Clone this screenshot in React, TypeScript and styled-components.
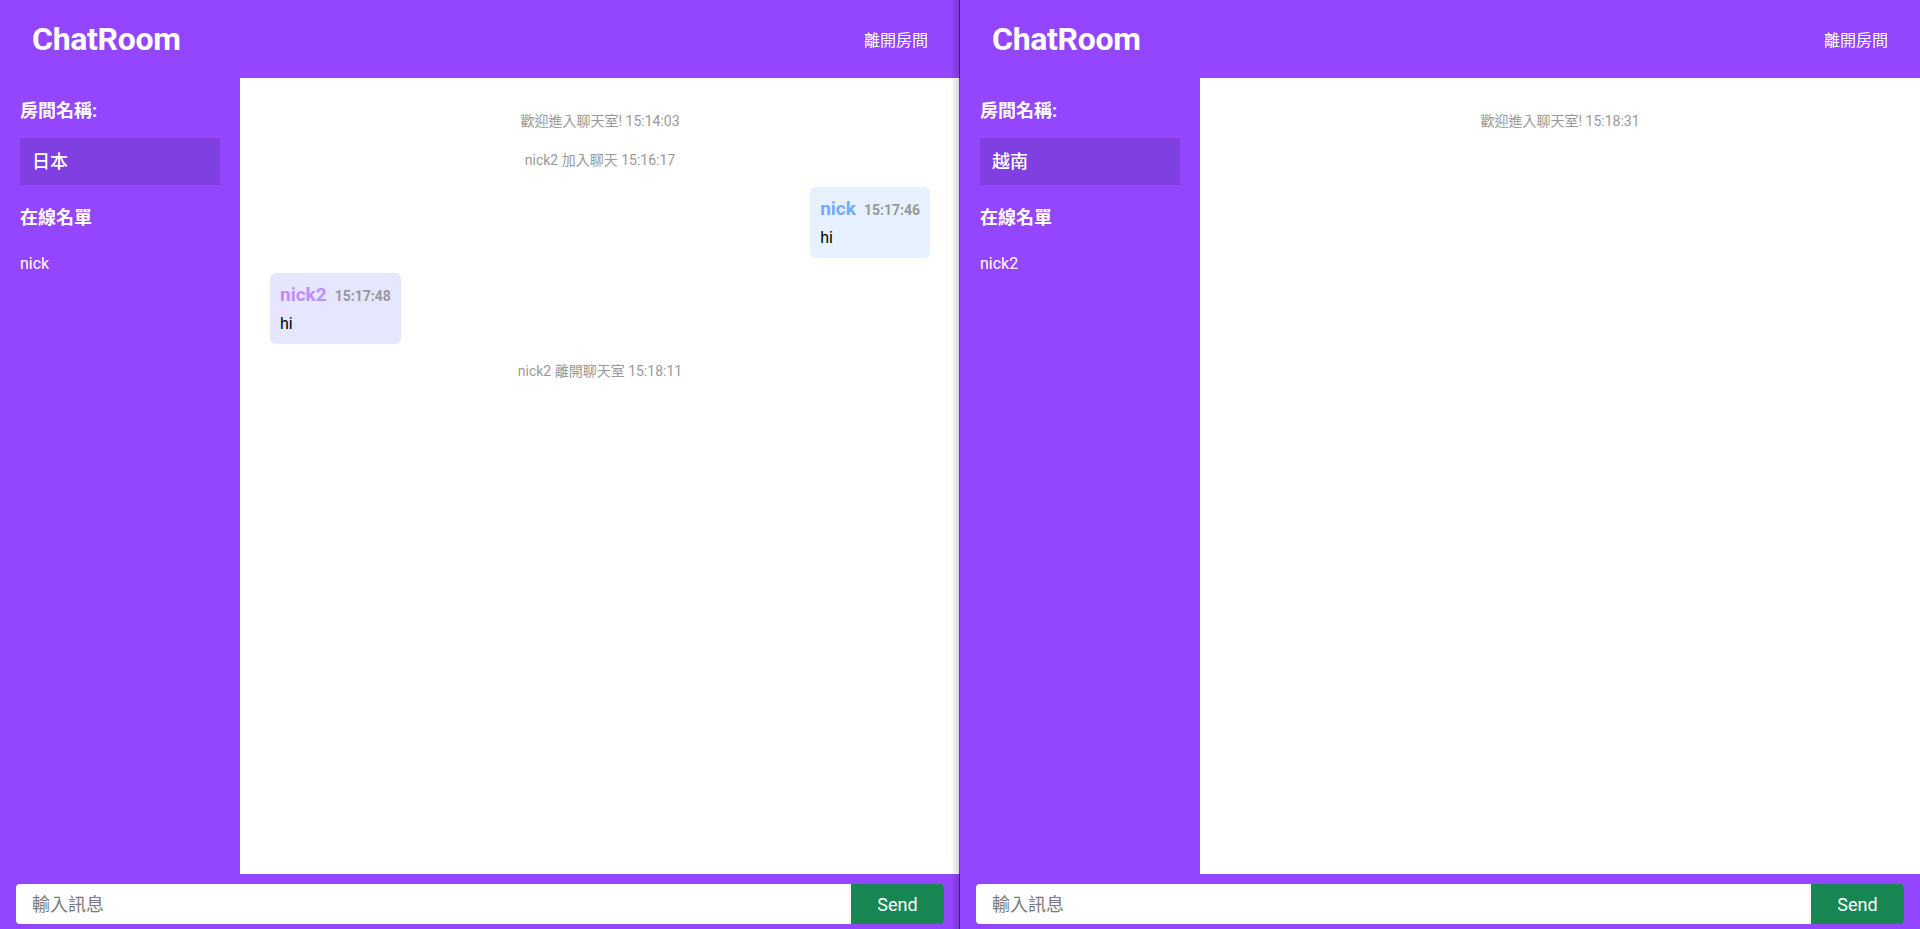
import React from "react";
import styled, { createGlobalStyle } from "styled-components";

const GlobalStyle = createGlobalStyle`
  html, body { margin: 0; padding: 0; }
  body {
    font-family: Roboto, "Noto Sans CJK TC", sans-serif;
    overflow: hidden;
  }
  * { box-sizing: border-box; }
`;

const Screen = styled.div`
  display: grid;
  grid-template-columns: 960px 960px;
  height: 100vh;
`;

const Pane = styled.div<{ $divider?: boolean }>`
  position: relative;
  display: flex;
  flex-direction: column;
  height: 100vh;
  background: #9446ff;
  ${(p) =>
    p.$divider &&
    `
    &::after {
      content: "";
      position: absolute;
      top: 0;
      right: 0;
      bottom: 0;
      width: 8px;
      background: linear-gradient(to right, rgba(0,0,0,0), rgba(0,0,0,0.16));
      border-right: 1px solid rgba(40, 20, 70, 0.75);
      pointer-events: none;
    }
  `}
`;

const Header = styled.header`
  height: 78px;
  flex: none;
  display: flex;
  align-items: center;
  justify-content: space-between;
  padding: 0 32px;
`;

const Brand = styled.h1`
  margin: 0;
  font-size: 32px;
  font-weight: 700;
  color: #fff;
  letter-spacing: -0.3px;
`;

const LeaveButton = styled.button`
  background: none;
  border: none;
  padding: 0;
  color: #fff;
  font-family: Roboto, "Noto Sans CJK TC", sans-serif;
  font-size: 16px;
  cursor: pointer;
`;

const Body = styled.div`
  flex: 1;
  display: flex;
  min-height: 0;
`;

const Sidebar = styled.aside`
  width: 240px;
  flex: none;
  padding: 20px;
  color: #fff;
`;

const SideHeading = styled.h3<{ $gap?: number }>`
  margin: ${(p) => p.$gap ?? 0}px 0 0;
  font-size: 18px;
  font-weight: 700;
  line-height: 25px;
`;

const RoomBox = styled.div`
  margin-top: 15px;
  background: #7f3fe1;
  padding: 12px;
  font-size: 18px;
  font-weight: 500;
  line-height: 23px;
`;

const UserList = styled.ul`
  list-style: none;
  margin: 22px 0 0;
  padding: 0;
`;

const User = styled.li`
  font-size: 16px;
  line-height: 24px;
`;

const ChatArea = styled.main`
  flex: 1;
  background: #fff;
  padding: 31px 30px 30px;
  display: flex;
  flex-direction: column;
  gap: 15px;
  overflow: hidden;
`;

const SystemMsg = styled.div`
  text-align: center;
  font-size: 14px;
  line-height: 24px;
  color: #999;
`;

const Bubble = styled.div<{ $mine?: boolean }>`
  align-self: ${(p) => (p.$mine ? "flex-end" : "flex-start")};
  background: ${(p) => (p.$mine ? "#e7f1ff" : "#e6e6ff")};
  border-radius: 6px;
  padding: 10px 10px 10px;
`;

const NameRow = styled.div`
  display: flex;
  align-items: baseline;
  gap: 8px;
  height: 24px;
  line-height: 24px;
  margin-bottom: 7px;
`;

const Name = styled.span<{ $mine?: boolean }>`
  font-size: 19px;
  font-weight: 700;
  color: ${(p) => (p.$mine ? "#72abff" : "#c08cff")};
`;

const Time = styled.span`
  font-size: 14px;
  line-height: 14px;
  font-weight: 700;
  color: #999;
`;

const Text = styled.div`
  font-size: 16px;
  line-height: 20px;
  color: #000;
`;

const Footer = styled.footer`
  flex: none;
  padding: 10px 16px 5px;
`;

const InputGroup = styled.form`
  display: flex;
  height: 40px;
`;

const MsgInput = styled.input`
  flex: 1;
  border: none;
  outline: none;
  border-radius: 4px 0 0 4px;
  padding: 0 16px;
  font-family: Roboto, "Noto Sans CJK TC", sans-serif;
  font-size: 18px;
  background: #fff;
  &::placeholder { color: #7a7a7a; }
`;

const SendButton = styled.button`
  width: 93px;
  border: none;
  border-radius: 0 4px 4px 0;
  background: #198754;
  color: #fff;
  font-family: Roboto, "Noto Sans CJK TC", sans-serif;
  font-size: 18px;
  cursor: pointer;
`;

type Msg =
  | { kind: "system"; text: string }
  | { kind: "chat"; name: string; time: string; text: string; mine: boolean };

type Room = { room: string; users: string[]; messages: Msg[] };

const rooms: Room[] = [
  {
    room: "日本",
    users: ["nick"],
    messages: [
      { kind: "system", text: "歡迎進入聊天室! 15:14:03" },
      { kind: "system", text: "nick2 加入聊天 15:16:17" },
      { kind: "chat", name: "nick", time: "15:17:46", text: "hi", mine: true },
      { kind: "chat", name: "nick2", time: "15:17:48", text: "hi", mine: false },
      { kind: "system", text: "nick2 離開聊天室 15:18:11" },
    ],
  },
  {
    room: "越南",
    users: ["nick2"],
    messages: [{ kind: "system", text: "歡迎進入聊天室! 15:18:31" }],
  },
];

function ChatPane({ data, divider }: { data: Room; divider?: boolean }) {
  return (
    <Pane $divider={divider}>
      <Header>
        <Brand>ChatRoom</Brand>
        <LeaveButton>離開房間</LeaveButton>
      </Header>
      <Body>
        <Sidebar>
          <SideHeading>房間名稱:</SideHeading>
          <RoomBox>{data.room}</RoomBox>
          <SideHeading $gap={20}>在線名單</SideHeading>
          <UserList>
            {data.users.map((u) => (
              <User key={u}>{u}</User>
            ))}
          </UserList>
        </Sidebar>
        <ChatArea>
          {data.messages.map((m, i) =>
            m.kind === "system" ? (
              <SystemMsg key={i}>{m.text}</SystemMsg>
            ) : (
              <Bubble key={i} $mine={m.mine}>
                <NameRow>
                  <Name $mine={m.mine}>{m.name}</Name>
                  <Time>{m.time}</Time>
                </NameRow>
                <Text>{m.text}</Text>
              </Bubble>
            )
          )}
        </ChatArea>
      </Body>
      <Footer>
        <InputGroup onSubmit={(e) => e.preventDefault()}>
          <MsgInput placeholder="輸入訊息" />
          <SendButton type="submit">Send</SendButton>
        </InputGroup>
      </Footer>
    </Pane>
  );
}

export default function App() {
  return (
    <>
      <GlobalStyle />
      <Screen>
        <ChatPane data={rooms[0]} divider />
        <ChatPane data={rooms[1]} />
      </Screen>
    </>
  );
}
